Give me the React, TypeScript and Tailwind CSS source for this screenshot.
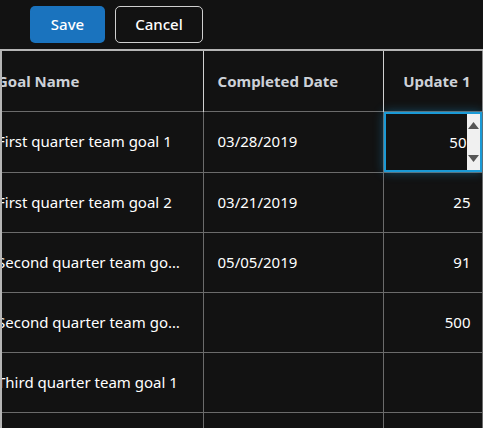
import React, { useState } from 'react';

interface GoalRow {
  name: string;
  completed: string;
  update1: string;
}

const rows: GoalRow[] = [
  { name: 'First quarter team goal 1', completed: '03/28/2019', update1: '50' },
  { name: 'First quarter team goal 2', completed: '03/21/2019', update1: '25' },
  { name: 'Second quarter team goal 1', completed: '05/05/2019', update1: '91' },
  { name: 'Second quarter team goal 2', completed: '', update1: '500' },
  { name: 'Third quarter team goal 1', completed: '', update1: '' },
  { name: 'Third quarter team goal 2', completed: '', update1: '' },
];

const SpinButtons: React.FC = () => (
  <div className="absolute right-0 top-0 bottom-0 w-[13px] bg-[#f0f0f0] flex flex-col items-center justify-between py-[8px]">
    <svg width="11" height="7" viewBox="0 0 11 7">
      <path d="M5.5 0 L11 7 L0 7 Z" fill="#555" />
    </svg>
    <svg width="11" height="7" viewBox="0 0 11 7">
      <path d="M0 0 L11 0 L5.5 7 Z" fill="#555" />
    </svg>
  </div>
);

export default function App() {
  const [editValue, setEditValue] = useState('50');

  return (
    <div
      className="w-[483px] h-[428px] bg-[#121212] overflow-hidden text-white"
      style={{ fontFamily: '"Noto Sans", "Open Sans", sans-serif' }}
    >
      {/* Toolbar */}
      <div className="flex items-start gap-[10px] pl-[30px] pt-[6px] h-[49px]">
        <button className="w-[75px] h-[37px] rounded-[5px] bg-[#1a73be] text-white text-[15px] font-medium">
          Save
        </button>
        <button className="w-[88px] h-[37px] rounded-[5px] border border-[#cfcfcf] text-white text-[15px] font-medium">
          Cancel
        </button>
      </div>

      {/* Grid, scrolled a little to the right */}
      <div className="border-t-2 border-l-2 border-[#b5b5b5] overflow-hidden">
        <table className="border-collapse table-fixed -ml-[19px] text-[15px]">
          <colgroup>
            <col className="w-[220px]" />
            <col className="w-[180px]" />
            <col className="w-[99px]" />
          </colgroup>
          <thead>
            <tr className="h-[60px] border-b border-[#6b6b6b]">
              <th className="text-left font-bold text-[#cdd1d8] px-[14px] border-r border-[#d0d0d0]">Goal Name</th>
              <th className="text-left font-bold text-[#cdd1d8] px-[14px] border-r border-[#d0d0d0]">Completed Date</th>
              <th className="text-right font-bold text-[#cdd1d8] pr-[11px] border-r border-[#8a8a8a]">Update 1</th>
            </tr>
          </thead>
          <tbody>
            {rows.map((r, i) => (
              <tr key={i} className="h-[60px] border-b border-[#6b6b6b]">
                <td className="px-[14px] border-r border-[#6b6b6b]">
                  <div className="truncate w-[188px]">{r.name}</div>
                </td>
                <td className="px-[14px] border-r border-[#6b6b6b]">{r.completed}</td>
                {i === 0 ? (
                  <td className="p-0 border-r border-[#6b6b6b]">
                    <div className="relative h-[60px] border-2 border-[#1a9ad6] shadow-[0_0_10px_rgba(26,154,214,0.45)]">
                      <input
                        value={editValue}
                        onChange={(e) => setEditValue(e.target.value)}
                        className="w-full h-full bg-transparent text-right text-white pr-[13px] outline-none"
                      />
                      <SpinButtons />
                    </div>
                  </td>
                ) : (
                  <td className="text-right pr-[11px] border-r border-[#6b6b6b]">{r.update1}</td>
                )}
              </tr>
            ))}
          </tbody>
        </table>
      </div>
    </div>
  );
}
